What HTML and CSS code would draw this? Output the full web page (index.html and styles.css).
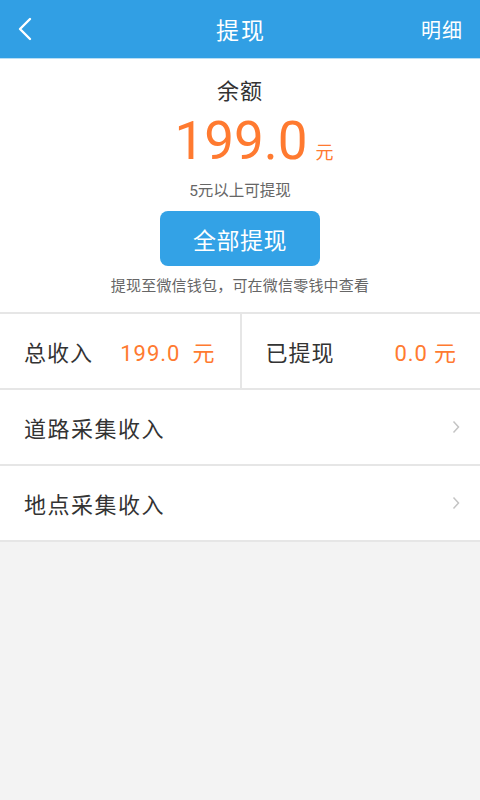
FILE: index.html
```html
<!DOCTYPE html>
<html lang="zh">
<head>
<meta charset="utf-8">
<link rel="stylesheet" href="styles.css">
</head>
<body>
<div class="app">
  <header class="topbar">
    <span class="back"><svg width="14" height="24" viewBox="0 0 14 24"><path d="M12 2 L2 12 L12 22" fill="none" stroke="#fff" stroke-width="2.4" stroke-linecap="round" stroke-linejoin="round"/></svg></span>
    <h1 class="title">提现</h1>
    <span class="detail">明细</span>
  </header>
  <section class="balance">
    <div class="label">余额</div>
    <div class="amount"><span class="num">199.0</span><span class="unit">元</span></div>
    <div class="hint">5元以上可提现</div>
    <button class="btn">全部提现</button>
    <div class="note">提现至微信钱包，可在微信零钱中查看</div>
  </section>
  <section class="stats">
    <div class="stat left"><span class="k">总收入</span><span class="v">199.0<span class="vu">元</span></span></div>
    <div class="stat right"><span class="k">已提现</span><span class="v">0.0<span class="vu sm">元</span></span></div>
  </section>
  <a class="row">道路采集收入<svg class="chev" width="8" height="14" viewBox="0 0 8 14"><path d="M1.5 1.5 L6.5 7 L1.5 12.5" fill="none" stroke="#c4c4c4" stroke-width="1.5"/></svg></a>
  <a class="row">地点采集收入<svg class="chev" width="8" height="14" viewBox="0 0 8 14"><path d="M1.5 1.5 L6.5 7 L1.5 12.5" fill="none" stroke="#c4c4c4" stroke-width="1.5"/></svg></a>
</div>
</body>
</html>
```
FILE: styles.css
```css
* { box-sizing: border-box; margin: 0; padding: 0; }
html, body { width: 480px; height: 800px; background: #f3f3f3; }
body { font-family: Roboto, "Noto Sans CJK SC", sans-serif; color: #333; }
.app { display: flex; flex-direction: column; }
.topbar {
  height: 59px; background: #319fe4; color: #fff;
  display: flex; align-items: center; justify-content: space-between;
  padding: 0 17px 0 18px; position: relative;
  border-bottom: 1px solid #b8def5;
}
.back { display: flex; align-items: center; width: 40px; }
.title { font-size: 23px; letter-spacing: 2px; font-weight: normal; position: absolute; left: 2px; right: 0; text-align: center; pointer-events: none; }
.detail { font-size: 20px; letter-spacing: 1px; }
.balance {
  background: #fff; display: flex; flex-direction: column; align-items: center;
  padding-top: 17px; height: 253px;
}
.label { font-size: 22px; line-height: 32px; color: #333; letter-spacing: 1px; }
.amount { color: #ff7a30; display: flex; align-items: baseline; margin-top: 3px; margin-left: 28px; }
.num { font-size: 53px; line-height: 60px; }
.unit { font-size: 18px; margin-left: 8px; }
.hint { font-size: 15.5px; color: #666; margin-top: 10px; line-height: 20px; }
.btn {
  margin-top: 10px; width: 160px; height: 55px; border: none; border-radius: 8px;
  background: #33a2e6; color: #fff; font-size: 23px; font-family: inherit; letter-spacing: 0.5px;
}
.note { font-size: 15px; color: #666; margin-top: 10px; line-height: 20px; letter-spacing: 0.2px; }
.stats {
  display: flex; background: #fff; height: 78px;
  border-top: 2px solid #e6e6e6; border-bottom: 2px solid #e6e6e6;
}
.stat { flex: 1; display: flex; align-items: center; justify-content: space-between; font-size: 22px; }
.stat.left { padding: 0 24px 0 24px; border-right: 2px solid #e6e6e6; }
.stat.right { padding: 0 23px 0 24px; }
.k { color: #333; letter-spacing: 1px; }
.v { color: #ff7a30; letter-spacing: 1px; }
.vu { margin-left: 12px; }
.vu.sm { margin-left: 6px; }
.row {
  display: flex; align-items: center; justify-content: space-between;
  background: #fff; height: 76px; padding: 0 20px 0 24px;
  font-size: 22px; color: #333; border-bottom: 2px solid #e6e6e6; letter-spacing: 1.5px;
}
.chev { display: block; }
```
